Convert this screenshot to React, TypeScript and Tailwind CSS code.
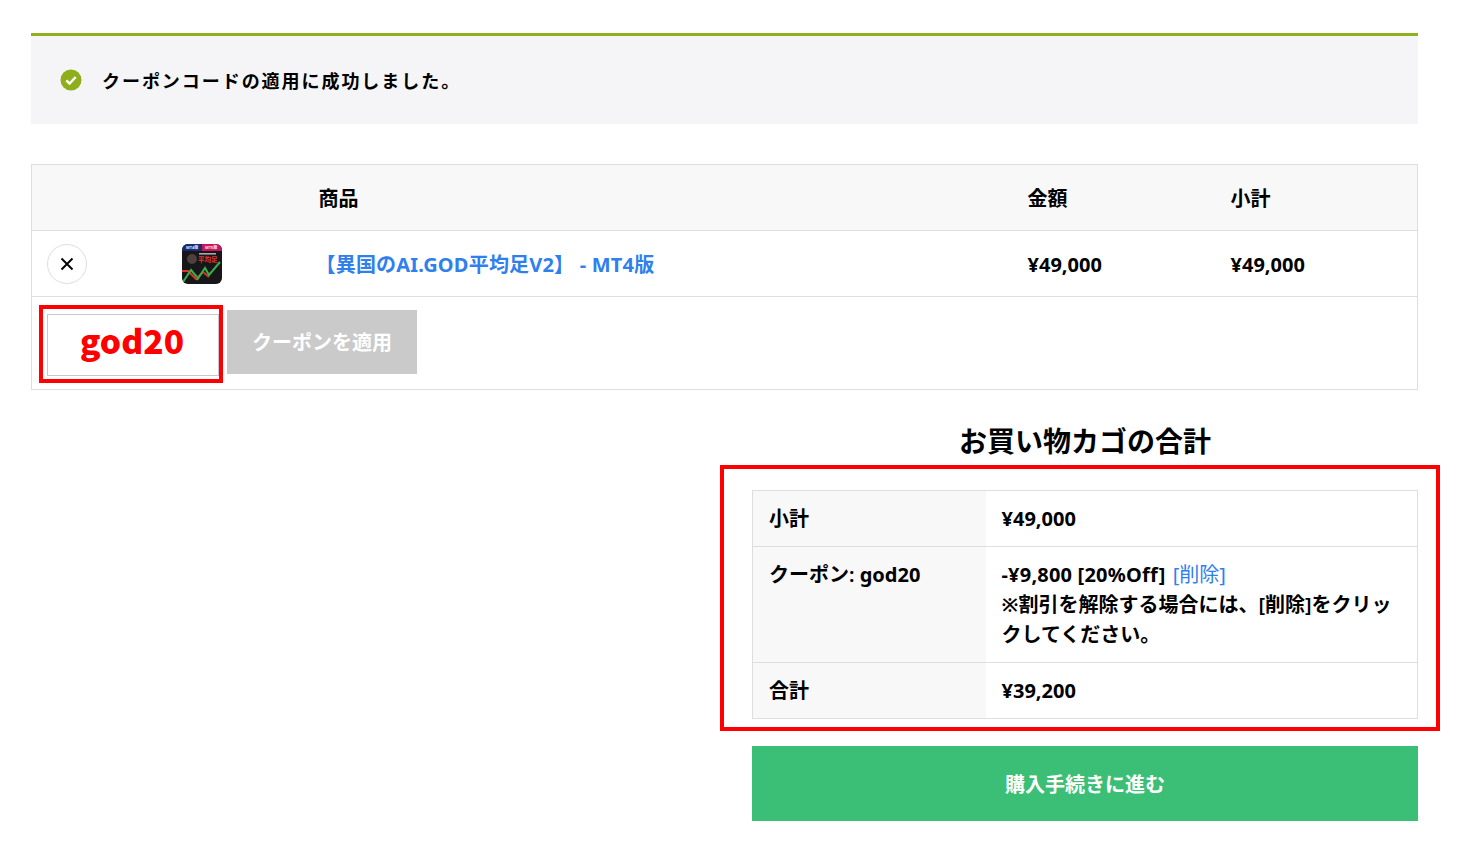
import React from "react";

const font = { fontFamily: '"Noto Sans","Noto Sans CJK JP",sans-serif' };
const cjk = { fontFamily: '"Noto Sans CJK JP","Noto Sans",sans-serif' };

function Thumb() {
  return (
    <svg width="40" height="40" viewBox="0 0 40 40" className="block">
      <defs>
        <clipPath id="c"><rect width="40" height="40" rx="6" /></clipPath>
      </defs>
      <g clipPath="url(#c)">
        <rect width="40" height="40" fill="#17171a" />
        <rect width="20" height="7" fill="#1c2a6e" />
        <rect x="20" width="20" height="7" fill="#c4175f" />
        <text x="4" y="5" fontSize="4" fontWeight="700" fill="#e6e8f5">MT4版</text>
        <text x="23" y="5" fontSize="4" fontWeight="700" fill="#fbe3ec">MT5版</text>
        <circle cx="10" cy="15" r="5" fill="#4d403e" />
        <rect x="17" y="9" width="17" height="1.6" fill="#a8a8a8" />
        <text x="16" y="18" fontSize="6.5" fontWeight="700" fill="#e5352b">平均足</text>
        <path d="M0 27 L6 27 L14 35 L21 28 L27 33" stroke="#d9352b" strokeWidth="2" fill="none" />
        <path d="M1 38 L9 26 L15 33 M15 36 L23 24 L27 31 L38 18" stroke="#35b04a" strokeWidth="2" fill="none" />
      </g>
    </svg>
  );
}

function Num({ children }: { children: React.ReactNode }) {
  return <span className="font-bold">{children}</span>;
}

export default function App() {
  return (
    <div className="relative h-[851px] overflow-hidden bg-white text-[20px] font-semibold text-black" style={font}>
      <div className="px-[31px] pr-[45px] pt-[33px]">
        <div className="flex h-[91px] items-center border-t-[3px] border-[#8fb01e] bg-[#f5f5f7] pl-[29px]">
          <svg width="22" height="22" viewBox="0 0 22 22" className="shrink-0">
            <circle cx="11" cy="11" r="10.5" fill="#8fae1b" />
            <path d="M6.3 11.3 L9.6 14.6 L15.7 8" stroke="#fff" strokeWidth="2.4" fill="none" />
          </svg>
          <span className="ml-[20px] pt-[2px] text-[18px] tracking-[1.95px]">クーポンコードの適用に成功しました。</span>
        </div>

        <table className="mt-[40px] w-full table-fixed border-collapse border border-[#dedede]">
          <thead>
            <tr className="h-[66px] bg-[#f8f8f8]">
              <th className="w-[135px]" />
              <th className="w-[152px]" />
              <th className="w-[709px] pt-[3px] text-left font-semibold">商品</th>
              <th className="w-[203px] pt-[3px] text-left font-semibold">金額</th>
              <th className="pt-[3px] text-left font-semibold">小計</th>
            </tr>
          </thead>
          <tbody>
            <tr className="h-[66px] border-t border-[#dedede]">
              <td className="pl-[15px]">
                <div className="flex h-[40px] w-[40px] items-center justify-center rounded-full border border-[#dedede]">
                  <svg width="14" height="14" viewBox="0 0 14 14">
                    <path d="M1.5 1.5 L12.5 12.5 M12.5 1.5 L1.5 12.5" stroke="#000" strokeWidth="1.9" />
                  </svg>
                </div>
              </td>
              <td className="pl-[15px]"><Thumb /></td>
              <td className="pt-[3px] text-left font-bold tracking-[0.2px] text-[#2f80ed]">
                <span className="-ml-[3px]">【異国のAI.GOD平均足V2】 - MT4版</span>
              </td>
              <td className="pt-[2px]"><Num>¥49,000</Num></td>
              <td className="pt-[2px]"><Num>¥49,000</Num></td>
            </tr>
            <tr className="h-[93px] border-t border-[#dedede]">
              <td colSpan={5} className="pl-[15px] align-top">
                <div className="flex items-start gap-[8px] pt-[13px]">
                  <div className="mt-[4px] flex h-[62px] w-[172px] items-center justify-center border border-[#c9c6d4] pb-[10px] pr-[2px] text-[33.5px] font-black text-[#ff0000]" style={cjk}>god20</div>
                  <div className="flex h-[64px] w-[190px] items-center justify-center bg-[#cacaca] pt-[2px] text-white">クーポンを適用</div>
                </div>
              </td>
            </tr>
          </tbody>
        </table>

        <div className="ml-[721px] mt-[31px]">
          <h2 className="text-center text-[28px] font-semibold leading-[40px]">お買い物カゴの合計</h2>
          <table className="mt-[29px] w-full table-fixed border-collapse border border-[#dedede]">
            <tbody>
              <tr className="h-[56px]">
                <th className="w-[233px] bg-[#f8f8f8] pl-[16px] text-left font-semibold">小計</th>
                <td className="pl-[16px]"><Num>¥49,000</Num></td>
              </tr>
              <tr className="border-t border-[#dedede]">
                <th className="bg-[#f8f8f8] pb-[12px] pl-[16px] pt-[13px] text-left align-top font-semibold leading-[30px]">クーポン: <Num>god20</Num></th>
                <td className="px-[16px] pb-[12px] pt-[13px] align-top leading-[30px]">
                  <span className="font-bold tracking-[0.2px]">-¥9,800 [20%Off]</span> <span className="ml-[2px] font-normal text-[#2f80ed]">[削除]</span>
                  <br />
                  ※割引を解除する場合には、[削除]をクリックしてください。
                </td>
              </tr>
              <tr className="h-[56px] border-t border-[#dedede]">
                <th className="bg-[#f8f8f8] pl-[16px] text-left font-semibold">合計</th>
                <td className="pl-[16px]"><Num>¥39,200</Num></td>
              </tr>
            </tbody>
          </table>
          <div className="mt-[27px] flex h-[75px] items-center justify-center bg-[#3bbf77] pt-[2px] text-white">購入手続きに進む</div>
        </div>
      </div>

      <div className="absolute left-[39px] top-[305px] h-[78px] w-[184px] border-[4px] border-[#ff0000]" />
      <div className="absolute left-[720px] top-[465px] h-[266px] w-[720px] border-[4px] border-[#ff0000]" />
    </div>
  );
}
